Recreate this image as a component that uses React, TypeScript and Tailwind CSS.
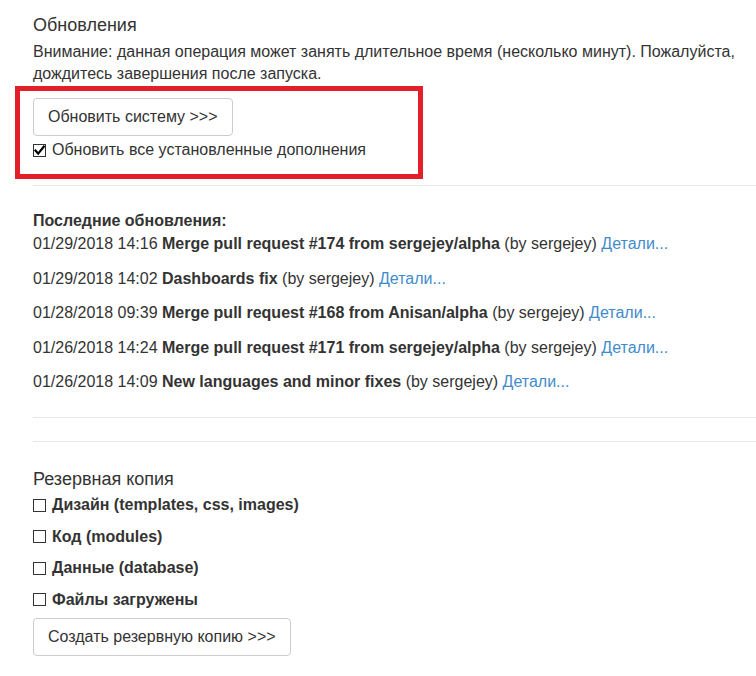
import React from 'react';

const updates = [
  { date: '01/29/2018 14:16', title: 'Merge pull request #174 from sergejey/alpha' },
  { date: '01/29/2018 14:02', title: 'Dashboards fix' },
  { date: '01/28/2018 09:39', title: 'Merge pull request #168 from Anisan/alpha' },
  { date: '01/26/2018 14:24', title: 'Merge pull request #171 from sergejey/alpha' },
  { date: '01/26/2018 14:09', title: 'New languages and minor fixes' },
];

const backupItems = [
  'Дизайн (templates, css, images)',
  'Код (modules)',
  'Данные (database)',
  'Файлы загружены',
];

function CheckBox({ checked }: { checked?: boolean }) {
  return (
    <span className="relative inline-block w-[13px] h-[13px] border border-[#333] bg-white shrink-0">
      {checked && (
        <svg viewBox="0 0 13 13" className="absolute -left-px -top-px w-[13px] h-[13px]">
          <path d="M2.5 6.5 L5.2 9.6 L10.8 2.6" fill="none" stroke="#000" strokeWidth="2.2" strokeLinecap="square" />
        </svg>
      )}
    </span>
  );
}

export default function App() {
  return (
    <div className="w-[756px] h-[676px] overflow-hidden bg-white text-[#333] text-[16px] leading-[22px] font-['Liberation_Sans',Arial,sans-serif]">
      <div className="pl-[33px] pt-[14px]">
        <h3 className="text-[18px] leading-[22px] font-normal">Обновления</h3>
        <p className="mt-[5px]">
          Внимание: данная операция может занять длительное время (несколько минут). Пожалуйста, дождитесь завершения после запуска.
        </p>

        <div className="-ml-[18px] mt-[1px] w-[408px] border-[5px] border-[#e3202a] pl-[13px] pt-[7px] pb-[13px]">
          <button className="h-[38px] px-[14px] border border-[#ccc] rounded-[4px] bg-white text-[#333]">
            Обновить систему &gt;&gt;&gt;
          </button>
          <label className="mt-[3px] flex items-center gap-[6px]">
            <CheckBox checked />
            <span>Обновить все установленные дополнения</span>
          </label>
        </div>

        <div className="mt-[6px] border-t border-[#e8e8e8]" />

        <div className="mt-[23px] leading-[23px]">
          <div className="font-bold">Последние обновления:</div>
          {updates.map((u, i) => (
            <div key={i} className={i === 0 ? '' : 'mt-[11.5px]'}>
              {u.date} <b>{u.title}</b> (by sergejey){' '}
              <a className="text-[#428bca]">Детали...</a>
            </div>
          ))}
        </div>

        <div className="mt-[23.5px] border-t border-[#e8e8e8]" />
        <div className="mt-[23px] border-t border-[#e8e8e8]" />

        <h3 className="mt-[26px] text-[18px] leading-[22px] font-normal">Резервная копия</h3>
        <div className="mt-[4.5px] flex flex-col gap-[9.5px]">
          {backupItems.map((t) => (
            <label key={t} className="flex items-center gap-[6px] font-bold">
              <CheckBox />
              <span>{t}</span>
            </label>
          ))}
        </div>
        <button className="mt-[7px] h-[38px] px-[14px] border border-[#ccc] rounded-[4px] bg-white text-[#333]">
          Создать резервную копию &gt;&gt;&gt;
        </button>
      </div>
    </div>
  );
}
